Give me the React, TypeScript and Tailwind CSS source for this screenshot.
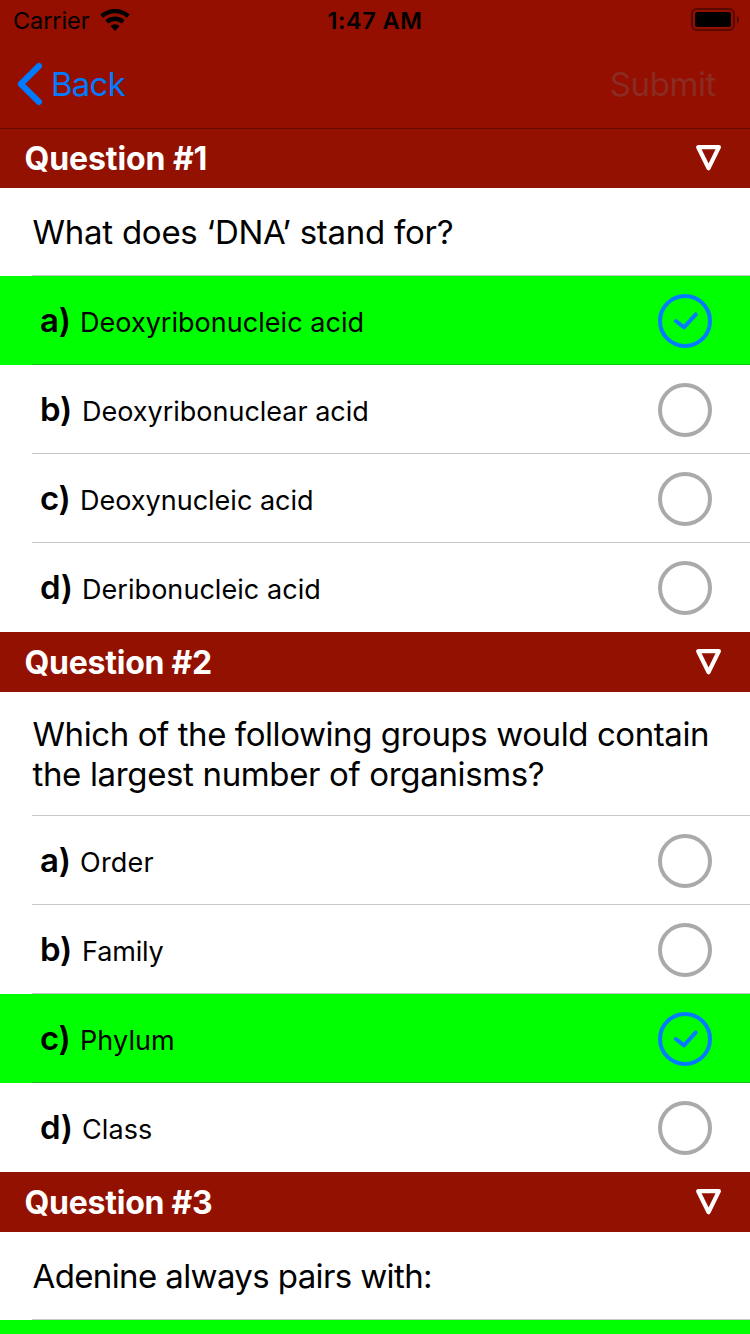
type Option = {
  label: string;
  text: string;
  tracking: string;
  selected?: boolean;
};

type Question = {
  title: string;
  titleTracking: string;
  prompt: { text: string; tracking: string }[];
  options: Option[];
};

const questions: Question[] = [
  {
    title: "Question #1",
    titleTracking: "tracking-[-0.1px]",
    prompt: [{ text: "What does ‘DNA’ stand for?", tracking: "tracking-[-0.25px]" }],
    options: [
      { label: "a)", text: "Deoxyribonucleic acid", tracking: "tracking-[0.03px]", selected: true },
      { label: "b)", text: "Deoxyribonuclear acid", tracking: "tracking-[-0.01px]" },
      { label: "c)", text: "Deoxynucleic acid", tracking: "tracking-[0px]" },
      { label: "d)", text: "Deribonucleic acid", tracking: "tracking-[0.05px]" },
    ],
  },
  {
    title: "Question #2",
    titleTracking: "tracking-[-0.25px]",
    prompt: [
      { text: "Which of the following groups would contain", tracking: "tracking-[-0.42px]" },
      { text: "the largest number of organisms?", tracking: "tracking-[-0.35px]" },
    ],
    options: [
      { label: "a)", text: "Order", tracking: "tracking-[0.24px]" },
      { label: "b)", text: "Family", tracking: "tracking-[-0.15px]" },
      { label: "c)", text: "Phylum", tracking: "tracking-[0.1px]", selected: true },
      { label: "d)", text: "Class", tracking: "tracking-[0.1px]" },
    ],
  },
  {
    title: "Question #3",
    titleTracking: "tracking-[-0.25px]",
    prompt: [{ text: "Adenine always pairs with:", tracking: "tracking-[-0.62px]" }],
    options: [],
  },
];

function WifiIcon() {
  return (
    <svg width="30" height="24" viewBox="0 0 30 24" fill="none" stroke="#000" strokeWidth="4.4">
      <path d="M1.7 8.2A19.9 19.9 0 0 1 28.3 8.2" />
      <path d="M6.8 13.9A12.3 12.3 0 0 1 23.2 13.9" />
      <path d="M15 23L10.5 18A6.7 6.7 0 0 1 19.5 18Z" fill="#000" stroke="none" />
    </svg>
  );
}

function BatteryIcon() {
  return (
    <svg width="50" height="24" viewBox="0 0 50 24" fill="none">
      <rect x="2" y="1" width="42" height="21" rx="5" stroke="#000" strokeOpacity="0.4" strokeWidth="2" />
      <rect x="5" y="4" width="36" height="15" rx="2.5" fill="#000" />
      <path d="M47 7.5C49.6 9 49.6 14 47 15.5Z" fill="#000" fillOpacity="0.45" />
    </svg>
  );
}

function StatusBar() {
  return (
    <div className="grid h-10 grid-cols-3 items-center text-[23.5px] leading-[30px]">
      <div className="flex items-center pl-[13px]">
        <span className="w-[86.5px] pt-0.5 tracking-[-0.08px]">Carrier</span>
        <WifiIcon />
      </div>
      <div className="pt-0.5 text-center font-semibold tracking-[0.5px]">1:47 AM</div>
      <div className="flex justify-end pr-[10px]">
        <BatteryIcon />
      </div>
    </div>
  );
}

function NavBar() {
  return (
    <div className="flex h-22 items-center justify-between pr-[34px] pl-4 text-[33px] leading-10">
      <button className="flex items-center text-[#007aff]">
        <svg width="28" height="44" viewBox="0 0 28 44" fill="none">
          <path d="M23 4L4.8 22L23 40" stroke="#007aff" strokeWidth="6" strokeLinecap="round" strokeLinejoin="round" />
        </svg>
        <span className="ml-[7px] tracking-[-0.75px]">Back</span>
      </button>
      <button className="tracking-[-0.4px] text-[#8b2b22]">Submit</button>
    </div>
  );
}

function SectionHeader({ title, tracking }: { title: string; tracking: string }) {
  return (
    <div className="flex h-15 items-center justify-between bg-[#931100] pr-[27px] pl-[24.5px] text-white">
      <h2 className={`pt-px text-[32px] leading-[39px] font-bold ${tracking}`}>{title}</h2>
      <svg width="28" height="28" viewBox="0 0 28 28" fill="none">
        <path d="M3.2 3.2H23.9L13.6 24.2Z" stroke="#fff" strokeWidth="4.2" strokeLinejoin="round" />
      </svg>
    </div>
  );
}

function Indicator({ selected }: { selected?: boolean }) {
  return (
    <svg width="54" height="54" viewBox="0 0 54 54" fill="none">
      <circle cx="27" cy="27" r="25" stroke={selected ? "#007aff" : "#aaaaaa"} strokeWidth="4" />
      {selected && (
        <path d="M17.8 27L26 33.4L37.8 20.4" stroke="#007aff" strokeWidth="4" strokeLinecap="round" strokeLinejoin="round" />
      )}
    </svg>
  );
}

function OptionRow({ option, last }: { option: Option; last: boolean }) {
  const wide = option.label === "b)" || option.label === "d)";
  return (
    <div className={`h-[89px] shrink-0 pl-8 ${option.selected ? "bg-[#00ff00]" : "bg-white"}`}>
      <div
        className={`flex h-full items-start justify-between border-b pt-[18px] pr-[38px] pl-2 ${
          last ? "border-transparent" : "border-[#3c3c43]/29"
        }`}
      >
        <div className="flex items-baseline pt-[6px]">
          <span className={`text-[33px] leading-10 font-semibold tracking-[-0.2px] ${wide ? "w-[42px]" : "w-10"}`}>
            {option.label}
          </span>
          <span className={`text-[27px] leading-none ${option.tracking}`}>{option.text}</span>
        </div>
        <Indicator selected={option.selected} />
      </div>
    </div>
  );
}

function QuestionSection({ question }: { question: Question }) {
  const multiline = question.prompt.length > 1;
  return (
    <section className="shrink-0">
      <SectionHeader title={question.title} tracking={question.titleTracking} />
      <div className="bg-white pl-8">
        <div
          className={`border-b border-[#3c3c43]/29 pl-[0.5px] text-[33px] leading-10 ${
            multiline ? "h-31 pt-[22px]" : "h-22 pt-6"
          }`}
        >
          {question.prompt.map((line) => (
            <p key={line.text} className={`whitespace-nowrap ${line.tracking}`}>
              {line.text}
            </p>
          ))}
        </div>
      </div>
      {question.options.map((option, i) => (
        <OptionRow key={option.label} option={option} last={i === question.options.length - 1} />
      ))}
    </section>
  );
}

export default function App() {
  return (
    <div className="flex h-[1334px] w-[750px] flex-col overflow-hidden bg-white font-['Inter',sans-serif] text-black">
      <header className="relative z-10 h-32 shrink-0 bg-[#940f00] shadow-[0_1px_0_#670b00]">
        <StatusBar />
        <NavBar />
      </header>
      <main className="flex min-h-0 flex-1 flex-col overflow-hidden">
        {questions.map((question) => (
          <QuestionSection key={question.title} question={question} />
        ))}
        {/* Top edge of the next selected answer */}
        <div className="flex-1 bg-[#00ff00]" />
      </main>
    </div>
  );
}
